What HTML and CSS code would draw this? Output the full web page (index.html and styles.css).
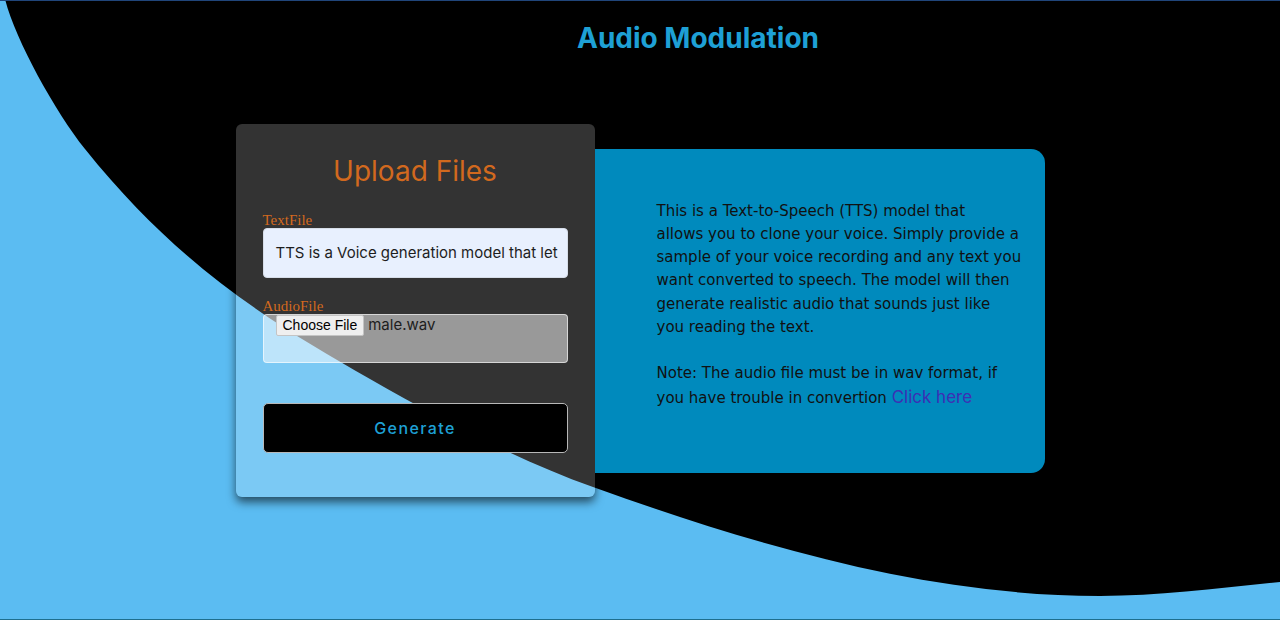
FILE: index.html
```html
<!DOCTYPE html>
<html lang="en">
<head>
<meta charset="utf-8">
<title>Audio Modulation</title>
<link rel="stylesheet" href="styles.css">
</head>
<body>
  <header class="header">
    <h1 class="title">Audio Modulation</h1>
  </header>
  <main class="main">
    <section class="card">
      <h2 class="card-title">Upload Files</h2>
      <label class="label">TextFile</label>
      <div class="text-input">TTS is a Voice generation model that let</div>
      <label class="label label-gap">AudioFile</label>
      <div class="file-input">
        <span class="file-btn">Choose File</span>
        <span class="file-name">male.wav</span>
      </div>
      <button class="generate">Generate</button>
    </section>
    <section class="info">
      <p class="info-text">This is a Text-to-Speech (TTS) model that<br>allows you to clone your voice. Simply provide a<br>sample of your voice recording and any text you<br>want converted to speech. The model will then<br>generate realistic audio that sounds just like<br>you reading the text.</p>
      <p class="info-text">Note: The audio file must be in wav format, if<br>you have trouble in convertion <a class="link" href="#">Click here</a></p>
    </section>
  </main>
</body>
</html>
```

FILE: styles.css
```css
* { box-sizing: border-box; }

html, body { margin: 0; padding: 0; }

body {
  height: 620px;
  overflow: hidden;
  border-top: 1px solid #20457a;
  border-bottom: 1px solid #1e6e8e;
  background-color: #5bbcf2;
  background-image: url("data:image/svg+xml;utf8,<svg xmlns='http://www.w3.org/2000/svg' viewBox='0 1 1280 618' width='1280' height='618' preserveAspectRatio='none'><path fill='black' d='M0,0 L5,0 C15,40 55,112.5 85,150 C180,268.75 275,325.9 370,380 C444.3,422.4 518.7,461.3 593,488 C762,548.8 931,597 1100,597 C1160,597 1220,589 1280,583 L1280,0 Z'/></svg>");
  background-repeat: no-repeat;
  background-size: 1280px 618px;
  font-family: "Inter", "Liberation Sans", sans-serif;
}

.header {
  display: flex;
  justify-content: center;
  padding-left: 116px;
  padding-top: 20px;
}

.title {
  margin: 0;
  font-size: 28px;
  line-height: 34px;
  font-weight: 700;
  color: #1ea0d5;
}

.main {
  display: flex;
  justify-content: center;
  align-items: center;
  margin-top: 69px;
}

.card {
  width: 359px;
  height: 373px;
  padding: 26px 27px 44px;
  border-radius: 6px;
  background: rgba(255, 255, 255, 0.2);
  box-shadow: 0 5px 10px rgba(0, 0, 0, 0.6);
  display: flex;
  flex-direction: column;
}

.card-title {
  margin: 0 0 20px;
  text-align: center;
  font-size: 28px;
  line-height: 42px;
  font-weight: 400;
  color: #d2691e;
}

.label {
  font-family: "Liberation Serif", serif;
  font-size: 15px;
  line-height: 16px;
  color: #d2691e;
}

.label-gap { margin-top: 20px; }

.text-input {
  height: 50px;
  border-radius: 4px;
  background: #e8f0fe;
  border: 1px solid #d6dde8;
  padding: 0 12px;
  display: flex;
  align-items: center;
  font-size: 15px;
  color: #1d1d1d;
  white-space: nowrap;
  overflow: hidden;
}

.file-input {
  height: 50px;
  border-radius: 4px;
  background: rgba(255, 255, 255, 0.5);
  border: 1px solid rgba(255, 255, 255, 0.6);
  padding: 0 12px;
  display: flex;
  align-items: flex-start;
  gap: 4px;
}

.file-btn {
  font-family: "Liberation Sans", Arial, sans-serif;
  font-size: 14px;
  line-height: 17px;
  padding: 1px 6px;
  background: #efefef;
  border: 1px solid #c4c4c4;
  border-radius: 2px;
  color: #000;
}

.file-name {
  font-size: 15px;
  line-height: 20px;
  color: #1d1d1d;
}

.generate {
  margin-top: 40px;
  height: 50px;
  width: 100%;
  background: #000;
  border: 1px solid #b8b8b8;
  border-radius: 5px;
  color: #1ea0d5;
  font-family: "Inter", "Liberation Sans", sans-serif;
  font-size: 16px;
  font-weight: 500;
  letter-spacing: 1.4px;
}

.info {
  width: 450px;
  height: 324px;
  padding: 51px 10px 0 62px;
  border-radius: 0 14px 14px 0;
  background: #008abd;
}

.info-text {
  margin: 0 0 23px;
  font-family: "DejaVu Sans", sans-serif;
  font-size: 15px;
  line-height: 23.3px;
  color: #111;
  white-space: nowrap;
}

.link {
  color: #3d2fb4;
  text-decoration: none;
  font-family: "Inter", "Liberation Sans", sans-serif;
  font-size: 17px;
}
```
